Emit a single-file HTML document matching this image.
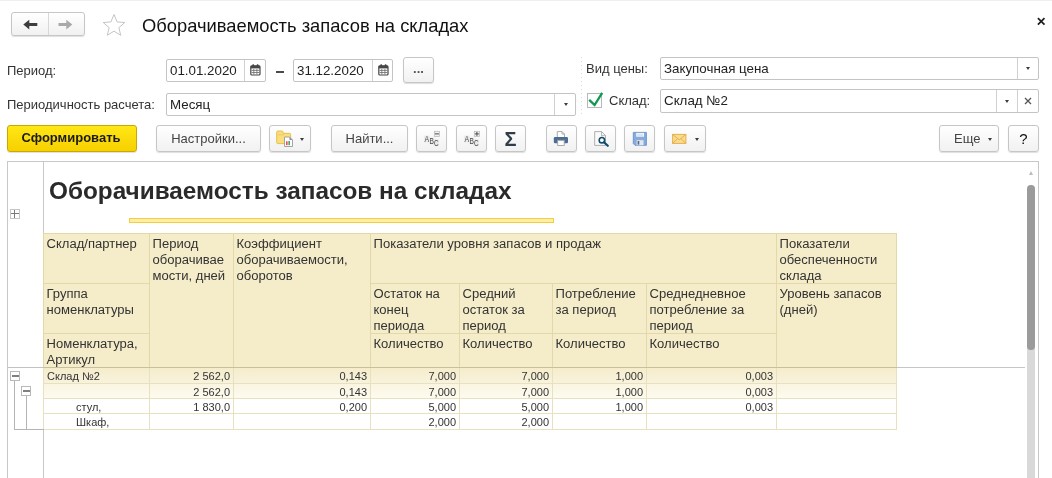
<!DOCTYPE html>
<html lang="ru"><head><meta charset="utf-8">
<title>Оборачиваемость запасов на складах</title>
<style>
*{box-sizing:border-box;margin:0;padding:0}
html,body{width:1052px;height:478px;overflow:hidden;background:#fff}
body{font-family:"Liberation Sans",sans-serif;font-size:13px;color:#333;position:relative}
.abs{position:absolute}
.lbl{position:absolute;font-size:13px;color:#333;white-space:nowrap;line-height:16px}
.inp{position:absolute;height:23px;border:1px solid #c4c4c4;border-radius:2px;background:#fff;font-size:13.33px;line-height:21px;padding-left:3px;color:#222;white-space:nowrap;overflow:hidden}
.inp .sb{position:absolute;top:0;bottom:0;width:22px;border-left:1px solid #d0d0d0}
.btn{position:absolute;height:27px;border:1px solid #c6c6c6;border-radius:3px;background:linear-gradient(#ffffff,#f1f1f1);box-shadow:0 1px 1px rgba(0,0,0,.13);font-size:13px;line-height:25px;text-align:center;color:#444;white-space:nowrap}
.tri{position:absolute;width:0;height:0;border-left:2.900px solid transparent;border-right:2.900px solid transparent;border-top:3.400px solid #3c3c3c}

.h,.d{position:absolute;border:1px solid #e3d9a8;overflow:hidden;white-space:nowrap}
.h{background:#f5ecc9;font-size:13.050px;line-height:16px;padding:2px 0 0 2.500px;color:#333}
.d{font-size:11px;line-height:14px;padding:1px 0 0 3px;color:#333;background:#fff;border-color:#e8e1c0}
.d.n{text-align:right;padding-right:3px}
.d.r1{background:linear-gradient(#f5ecca,#f8f3de)}
.d.r2{background:linear-gradient(#faf5e0,#fdfbf0)}
.ind{padding-left:29px}
</style></head><body>
<div id="root" style="position:absolute;left:0;top:0;width:1052px;height:478px;will-change:transform">

<!-- top bar -->
<div class="btn" style="left:11px;top:12px;width:74px;height:24px"></div>
<div class="abs" style="left:48px;top:13px;width:1px;height:22px;background:#d8d8d8"></div>
<svg class="abs" style="left:22px;top:18px" width="18" height="14" viewBox="0 0 18 14"><path d="M1.300 6.600L7.300 1.800V5.100H15.300V8.100H7.300V11.400Z" fill="#3d3d3d"/></svg>
<svg class="abs" style="left:57px;top:18px" width="18" height="14" viewBox="0 0 18 14"><path d="M15.300 6.600L9.300 1.800V5.100H1.500V8.100H9.300V11.400Z" fill="#a9a9a9"/></svg>
<svg class="abs" style="left:102px;top:13px" width="24" height="24" viewBox="0 0 24 24"><path d="M12 1.500l3.100 7.400 7.700.600-5.900 5.100 1.800 7.700L12 18.100 5.300 22.300l1.800-7.700-5.900-5.100 7.700-.600z" fill="#fff" stroke="#c4c4c4" stroke-width="1"/></svg>
<div class="abs" style="left:142px;top:14px;font-size:18.33px;line-height:24px;color:#111;white-space:nowrap">Оборачиваемость запасов на складах</div>
<svg class="abs" style="left:1034px;top:14px" width="14" height="14" viewBox="0 0 14 14"><path d="M3.900 4.100L10.500 10.700M10.500 4.100L3.900 10.700" fill="none" stroke="#1f1f1f" stroke-width="1.700"/></svg>
<div class="abs" style="left:0;top:0;width:1052px;height:1px;background:#efefef"></div>

<!-- row 1 -->
<div class="lbl" style="left:7px;top:63px">Период:</div>
<div class="inp" style="left:166px;top:59px;width:100px">01.01.2020<span class="sb" style="right:0;width:21px"></span></div>
<svg class="abs" style="left:250px;top:64px" width="11" height="12" viewBox="0 0 11 12"><rect x="0.800" y="1.800" width="9.200" height="9.200" rx="1" fill="#fff" stroke="#474747" stroke-width="1.200"/><rect x="0.800" y="1.800" width="9.200" height="2.600" fill="#474747"/><rect x="2.300" y="0.300" width="1.800" height="2.400" rx=".6" fill="#474747"/><rect x="6.700" y="0.300" width="1.800" height="2.400" rx=".6" fill="#474747"/><path d="M1.500 6.400h8M1.500 8.500h8M3.800 5v5.500M6.900 5v5.500" stroke="#777" stroke-width=".9" fill="none"/></svg>
<div class="abs" style="left:276px;top:71px;width:8px;height:2px;background:#4a4a4a"></div>
<div class="inp" style="left:293px;top:59px;width:100px">31.12.2020<span class="sb" style="right:0;width:20px"></span></div>
<svg class="abs" style="left:378px;top:64px" width="11" height="12" viewBox="0 0 11 12"><rect x="0.800" y="1.800" width="9.200" height="9.200" rx="1" fill="#fff" stroke="#474747" stroke-width="1.200"/><rect x="0.800" y="1.800" width="9.200" height="2.600" fill="#474747"/><rect x="2.300" y="0.300" width="1.800" height="2.400" rx=".6" fill="#474747"/><rect x="6.700" y="0.300" width="1.800" height="2.400" rx=".6" fill="#474747"/><path d="M1.500 6.400h8M1.500 8.500h8M3.800 5v5.500M6.900 5v5.500" stroke="#777" stroke-width=".9" fill="none"/></svg>
<div class="btn" style="left:403px;top:57px;width:31px;height:26px;line-height:22px;font-weight:bold;color:#555">...</div>
<div class="lbl" style="left:586px;top:61px">Вид цены:</div>
<div class="inp" style="left:660px;top:57px;width:379px">Закупочная цена<span class="sb" style="right:0;width:21px"></span><span class="tri" style="right:8.500px;top:9px"></span></div>

<div class="abs" style="left:580.500px;top:57px;width:1px;height:58px;background:repeating-linear-gradient(#dedede 0 1.500px,transparent 1.500px 4px)"></div>
<!-- row 2 -->
<div class="lbl" style="left:7px;top:97px">Периодичность расчета:</div>
<div class="inp" style="left:166px;top:93px;width:410px">Месяц<span class="sb" style="right:0;width:21px"></span><span class="tri" style="right:7.500px;top:9px"></span></div>
<div class="abs" style="left:587px;top:93px;width:15px;height:15px;border:1px solid #b8b8b8;background:#fff"></div>
<svg class="abs" style="left:586px;top:90px" width="20" height="20" viewBox="0 0 20 20"><path d="M3.200 9.800L8.600 15 16.200 2.800" fill="none" stroke="#0c9b4c" stroke-width="2.300"/></svg>
<div class="lbl" style="left:609px;top:93px">Склад:</div>
<div class="inp" style="left:660px;top:89px;width:379px;height:24px">Склад №2<span class="sb" style="right:20px;width:22px"></span><span class="sb" style="right:0;width:21px"></span><span class="tri" style="right:29.500px;top:10px"></span><svg class="abs" style="right:4px;top:5px" width="12" height="12" viewBox="0 0 12 12"><path d="M3 3l6 6M9 3l-6 6" stroke="#555" stroke-width="1.300" fill="none"/></svg></div>

<!-- row 3 buttons -->
<div class="btn" style="left:7px;top:125px;width:130px;background:linear-gradient(#ffe715,#f7d000);border-color:#c9a800;color:#1a1a1a;font-weight:bold;padding-right:2px;line-height:24px">Сформировать</div>
<div class="btn" style="left:156px;top:125px;width:105px">Настройки...</div>
<div class="btn" style="left:269px;top:125px;width:42px"><span class="tri" style="left:30px;top:12px"></span></div>
<div class="btn" style="left:331px;top:125px;width:77px">Найти...</div>
<div class="btn" style="left:416px;top:125px;width:31px"></div>
<div class="btn" style="left:456px;top:125px;width:31px"></div>
<div class="btn" style="left:495px;top:125px;width:31px;font-size:20px;font-weight:bold;color:#303c49;line-height:27px">Σ</div>
<div class="btn" style="left:546px;top:125px;width:31px"></div>
<div class="btn" style="left:585px;top:125px;width:31px"></div>
<div class="btn" style="left:624px;top:125px;width:31px"></div>
<div class="btn" style="left:664px;top:125px;width:42px"><span class="tri" style="left:30px;top:12px"></span></div>
<div class="btn" style="left:939px;top:125px;width:60px;text-align:left;padding-left:14px">Еще<span class="tri" style="right:6px;top:12px"></span></div>
<div class="btn" style="left:1008px;top:125px;width:31px;color:#111;font-size:15px">?</div>


<!-- icons -->
<svg class="abs" style="left:275px;top:129px" width="20" height="20" viewBox="0 0 20 20">
<path d="M1.700 3.200Q1.700 2 2.900 2H6.800Q8 2 8 3.200V4.300H14.600Q15.600 4.300 15.600 5.300V13.600Q15.600 14.600 14.600 14.600H2.700Q1.700 14.600 1.700 13.600Z" fill="#f9de7e" stroke="#e9bf4e" stroke-width="1"/>
<path d="M2.200 5.800H9" stroke="#ecc85e" stroke-width=".8" fill="none"/>
<path d="M9.500 8H14.500L17.500 11V17.500H9.500Z" fill="#fff" stroke="#9a9a9a" stroke-width=".9"/>
<path d="M14.500 8V11H17.500Z" fill="#7d8fb0"/>
<rect x="11" y="12.300" width="1.600" height="3.900" fill="#d9534f"/><rect x="13.400" y="11.900" width="1.500" height="4.300" fill="#4f9a54"/>
</svg>
<svg class="abs" style="left:422px;top:129px" width="20" height="20" viewBox="0 0 20 20" font-family="Liberation Sans, sans-serif" font-size="8.400" fill="#4a4a4a">
<rect x="2.300" y="6.600" width="5.200" height="6.800" fill="#e9e9e9"/><rect x="7.200" y="8.500" width="5" height="6.800" fill="#e9e9e9"/><rect x="11.700" y="10.400" width="5.300" height="6.800" fill="#e9e9e9"/>
<text x="2.500" y="13" textLength="4.600" lengthAdjust="spacingAndGlyphs">A</text><text x="7.400" y="14.900" textLength="4.400" lengthAdjust="spacingAndGlyphs">B</text><text x="12" y="16.800" textLength="4.600" lengthAdjust="spacingAndGlyphs">C</text>
<rect x="12.300" y="2.300" width="5.200" height="5.200" fill="#f0f0f0" stroke="#b5b5b5" stroke-width=".7"/><path d="M12.900 4.900h4" stroke="#4a4a4a" stroke-width="1" fill="none"/>
</svg>
<svg class="abs" style="left:462px;top:129px" width="20" height="20" viewBox="0 0 20 20" font-family="Liberation Sans, sans-serif" font-size="8.400" fill="#4a4a4a">
<rect x="2.300" y="6.600" width="5.200" height="6.800" fill="#e9e9e9"/><rect x="7.200" y="8.500" width="5" height="6.800" fill="#e9e9e9"/><rect x="11.700" y="10.400" width="5.300" height="6.800" fill="#e9e9e9"/>
<text x="2.500" y="13" textLength="4.600" lengthAdjust="spacingAndGlyphs">A</text><text x="7.400" y="14.900" textLength="4.400" lengthAdjust="spacingAndGlyphs">B</text><text x="12" y="16.800" textLength="4.600" lengthAdjust="spacingAndGlyphs">C</text>
<rect x="12.300" y="2.300" width="5.200" height="5.200" fill="#f0f0f0" stroke="#b5b5b5" stroke-width=".7"/><path d="M12.900 4.900h4M14.900 2.900v4" stroke="#4a4a4a" stroke-width="1" fill="none"/>
</svg>
<svg class="abs" style="left:551px;top:129px" width="20" height="20" viewBox="0 0 20 20">
<path d="M6.300 8.500V2.600H11L13.500 5.100V8.500Z" fill="#fff" stroke="#a0a0a0" stroke-width=".9"/><path d="M11 2.600V5.100H13.500" fill="none" stroke="#a0a0a0" stroke-width=".8"/>
<rect x="2.800" y="8" width="14.200" height="6.300" rx="1.300" fill="#4d6c94"/>
<rect x="6.700" y="11.300" width="6.500" height="5.200" fill="#fff" stroke="#a0a0a0" stroke-width=".9"/>
</svg>
<svg class="abs" style="left:590px;top:129px" width="20" height="20" viewBox="0 0 20 20">
<path d="M4.700 2.600H11.500L15.500 6.600V16.400H4.700Z" fill="#fafafa" stroke="#a6a6a6" stroke-width=".9"/><path d="M11.500 2.600V6.600H15.500" fill="none" stroke="#a6a6a6" stroke-width=".8"/>
<circle cx="11.900" cy="11.200" r="2.700" fill="#fff" stroke="#0f4c6e" stroke-width="1.600"/><path d="M14 13.300L17.800 16.800" stroke="#0f4c6e" stroke-width="2.200" stroke-linecap="round"/>
</svg>
<svg class="abs" style="left:630px;top:129px" width="20" height="20" viewBox="0 0 20 20">
<path d="M3.300 3.400H16.400V16.300H5L3.300 14.600Z" fill="#86abdc" stroke="#6a93c9" stroke-width=".9"/>
<rect x="6.200" y="3.900" width="7.800" height="3.800" fill="#f4f7fb"/><path d="M7.200 5.200h5.800M7.200 6.500h5.800" stroke="#c5d3e6" stroke-width=".6"/>
<rect x="6.600" y="11.200" width="6.900" height="5" fill="#e4e8ee"/><rect x="7.600" y="12" width="1.700" height="3.600" fill="#5a6b84"/>
</svg>
<svg class="abs" style="left:670px;top:129px" width="20" height="20" viewBox="0 0 20 20">
<rect x="2.600" y="5.400" width="13.300" height="9" fill="#f9dc94" stroke="#e7b14a" stroke-width="1"/>
<path d="M2.800 5.600L9.250 10.800L15.700 5.600M2.800 14.200L7.600 9.600M15.700 14.200L10.900 9.600" fill="none" stroke="#e3aa40" stroke-width=".9"/>
</svg>
<!-- report area -->
<div class="abs" id="rep" style="left:7px;top:161px;width:1032px;height:330px;border:1px solid #c8c8c8;border-bottom:none"></div>
<div class="abs" style="left:43px;top:162px;width:1px;height:320px;background:#c8c8c8"></div>

<!--TABLE-->
<div class="abs" style="left:49px;top:176px;font-size:24.340px;font-weight:bold;line-height:30px;color:#2a2a2a;white-space:nowrap">Оборачиваемость запасов на складах</div>
<div class="abs" style="left:129px;top:218px;width:425px;height:5px;border:1px solid #f5cd3e;background:#fdeea6"></div>
<div class="h" style="left:43px;top:233px;width:107px;height:51px;">Склад/партнер</div>
<div class="h" style="left:43px;top:283px;width:107px;height:51px;">Группа<br>номенклатуры</div>
<div class="h" style="left:43px;top:333px;width:107px;height:35px;">Номенклатура,<br>Артикул</div>
<div class="h" style="left:149px;top:233px;width:85px;height:135px;">Период<br>оборачивае<br>мости, дней</div>
<div class="h" style="left:233px;top:233px;width:138px;height:135px;">Коэффициент<br>оборачиваемости,<br>оборотов</div>
<div class="h" style="left:370px;top:233px;width:407px;height:51px;">Показатели уровня запасов и продаж</div>
<div class="h" style="left:776px;top:233px;width:121px;height:51px;">Показатели<br>обеспеченности<br>склада</div>
<div class="h" style="left:370px;top:283px;width:90px;height:51px;">Остаток на<br>конец<br>периода</div>
<div class="h" style="left:459px;top:283px;width:94px;height:51px;">Средний<br>остаток за<br>период</div>
<div class="h" style="left:552px;top:283px;width:95px;height:51px;">Потребление<br>за период</div>
<div class="h" style="left:646px;top:283px;width:131px;height:51px;">Среднедневное<br>потребление за<br>период</div>
<div class="h" style="left:776px;top:283px;width:121px;height:85px;">Уровень запасов<br>(дней)</div>
<div class="h" style="left:370px;top:333px;width:90px;height:35px;">Количество</div>
<div class="h" style="left:459px;top:333px;width:94px;height:35px;">Количество</div>
<div class="h" style="left:552px;top:333px;width:95px;height:35px;">Количество</div>
<div class="h" style="left:646px;top:333px;width:131px;height:35px;">Количество</div>
<div class="d r1" style="left:43px;top:367px;width:107px;height:17px;">Склад №2</div>
<div class="d r1 n" style="left:149px;top:367px;width:85px;height:17px;">2 562,0</div>
<div class="d r1 n" style="left:233px;top:367px;width:138px;height:17px;">0,143</div>
<div class="d r1 n" style="left:370px;top:367px;width:90px;height:17px;">7,000</div>
<div class="d r1 n" style="left:459px;top:367px;width:94px;height:17px;">7,000</div>
<div class="d r1 n" style="left:552px;top:367px;width:95px;height:17px;">1,000</div>
<div class="d r1 n" style="left:646px;top:367px;width:131px;height:17px;">0,003</div>
<div class="d r1 n" style="left:776px;top:367px;width:121px;height:17px;"></div>
<div class="d r2" style="left:43px;top:383px;width:107px;height:16px;"></div>
<div class="d r2 n" style="left:149px;top:383px;width:85px;height:16px;">2 562,0</div>
<div class="d r2 n" style="left:233px;top:383px;width:138px;height:16px;">0,143</div>
<div class="d r2 n" style="left:370px;top:383px;width:90px;height:16px;">7,000</div>
<div class="d r2 n" style="left:459px;top:383px;width:94px;height:16px;">7,000</div>
<div class="d r2 n" style="left:552px;top:383px;width:95px;height:16px;">1,000</div>
<div class="d r2 n" style="left:646px;top:383px;width:131px;height:16px;">0,003</div>
<div class="d r2 n" style="left:776px;top:383px;width:121px;height:16px;"></div>
<div class="d r3" style="left:43px;top:398px;width:107px;height:16px;"><span class="ind">стул,</span></div>
<div class="d r3 n" style="left:149px;top:398px;width:85px;height:16px;">1 830,0</div>
<div class="d r3 n" style="left:233px;top:398px;width:138px;height:16px;">0,200</div>
<div class="d r3 n" style="left:370px;top:398px;width:90px;height:16px;">5,000</div>
<div class="d r3 n" style="left:459px;top:398px;width:94px;height:16px;">5,000</div>
<div class="d r3 n" style="left:552px;top:398px;width:95px;height:16px;">1,000</div>
<div class="d r3 n" style="left:646px;top:398px;width:131px;height:16px;">0,003</div>
<div class="d r3 n" style="left:776px;top:398px;width:121px;height:16px;"></div>
<div class="d r3" style="left:43px;top:413px;width:107px;height:17px;"><span class="ind">Шкаф,</span></div>
<div class="d r3 n" style="left:149px;top:413px;width:85px;height:17px;"></div>
<div class="d r3 n" style="left:233px;top:413px;width:138px;height:17px;"></div>
<div class="d r3 n" style="left:370px;top:413px;width:90px;height:17px;">2,000</div>
<div class="d r3 n" style="left:459px;top:413px;width:94px;height:17px;">2,000</div>
<div class="d r3 n" style="left:552px;top:413px;width:95px;height:17px;"></div>
<div class="d r3 n" style="left:646px;top:413px;width:131px;height:17px;"></div>
<div class="d r3 n" style="left:776px;top:413px;width:121px;height:17px;"></div>
<div class="abs" style="left:8px;top:367px;width:36px;height:1px;background:#c2c2c2"></div>
<div class="abs" style="left:44px;top:367px;width:853px;height:1px;background:rgba(110,105,80,.28)"></div>
<div class="abs" style="left:897px;top:367px;width:128px;height:1px;background:#c6c6c6"></div>
<!-- tree -->
<div class="abs" style="left:14px;top:380px;width:1px;height:49px;background:#b4b4b4"></div>
<div class="abs" style="left:25.500px;top:395px;width:1px;height:34px;background:#b4b4b4"></div>
<div class="abs" style="left:14px;top:428.500px;width:30px;height:1px;background:#b4b4b4"></div>
<div class="abs" style="left:10px;top:371px;width:10px;height:10px;border:1px solid #b9b9b9;background:#fff"></div>
<div class="abs" style="left:11.500px;top:375px;width:7px;height:1.500px;background:#808080"></div>
<div class="abs" style="left:21px;top:386px;width:10px;height:10px;border:1px solid #b9b9b9;background:#fff"></div>
<div class="abs" style="left:22.500px;top:390px;width:7px;height:1.500px;background:#808080"></div>
<div class="abs" style="left:10px;top:209px;width:10px;height:10px;border:1px solid #c6c6c6;background:#fff"></div>
<div class="abs" style="left:11px;top:213px;width:8px;height:1px;background:#7a7a7a"></div>
<div class="abs" style="left:14px;top:210px;width:1px;height:8px;background:#7a7a7a"></div>
<!-- scrollbar -->
<div class="abs" style="left:1027px;top:345px;width:7.500px;height:140px;background:#d9d9d9"></div>
<div class="abs" style="left:1027px;top:184.500px;width:7.500px;height:165px;border-radius:3.750px;background:#9b9b9b"></div>
<div class="abs" style="left:1028.500px;top:171px;width:0;height:0;border-left:2.500px solid transparent;border-right:2.500px solid transparent;border-bottom:4px solid #bdbdbd"></div>
<!--/TABLE-->
</div>
</body></html>
